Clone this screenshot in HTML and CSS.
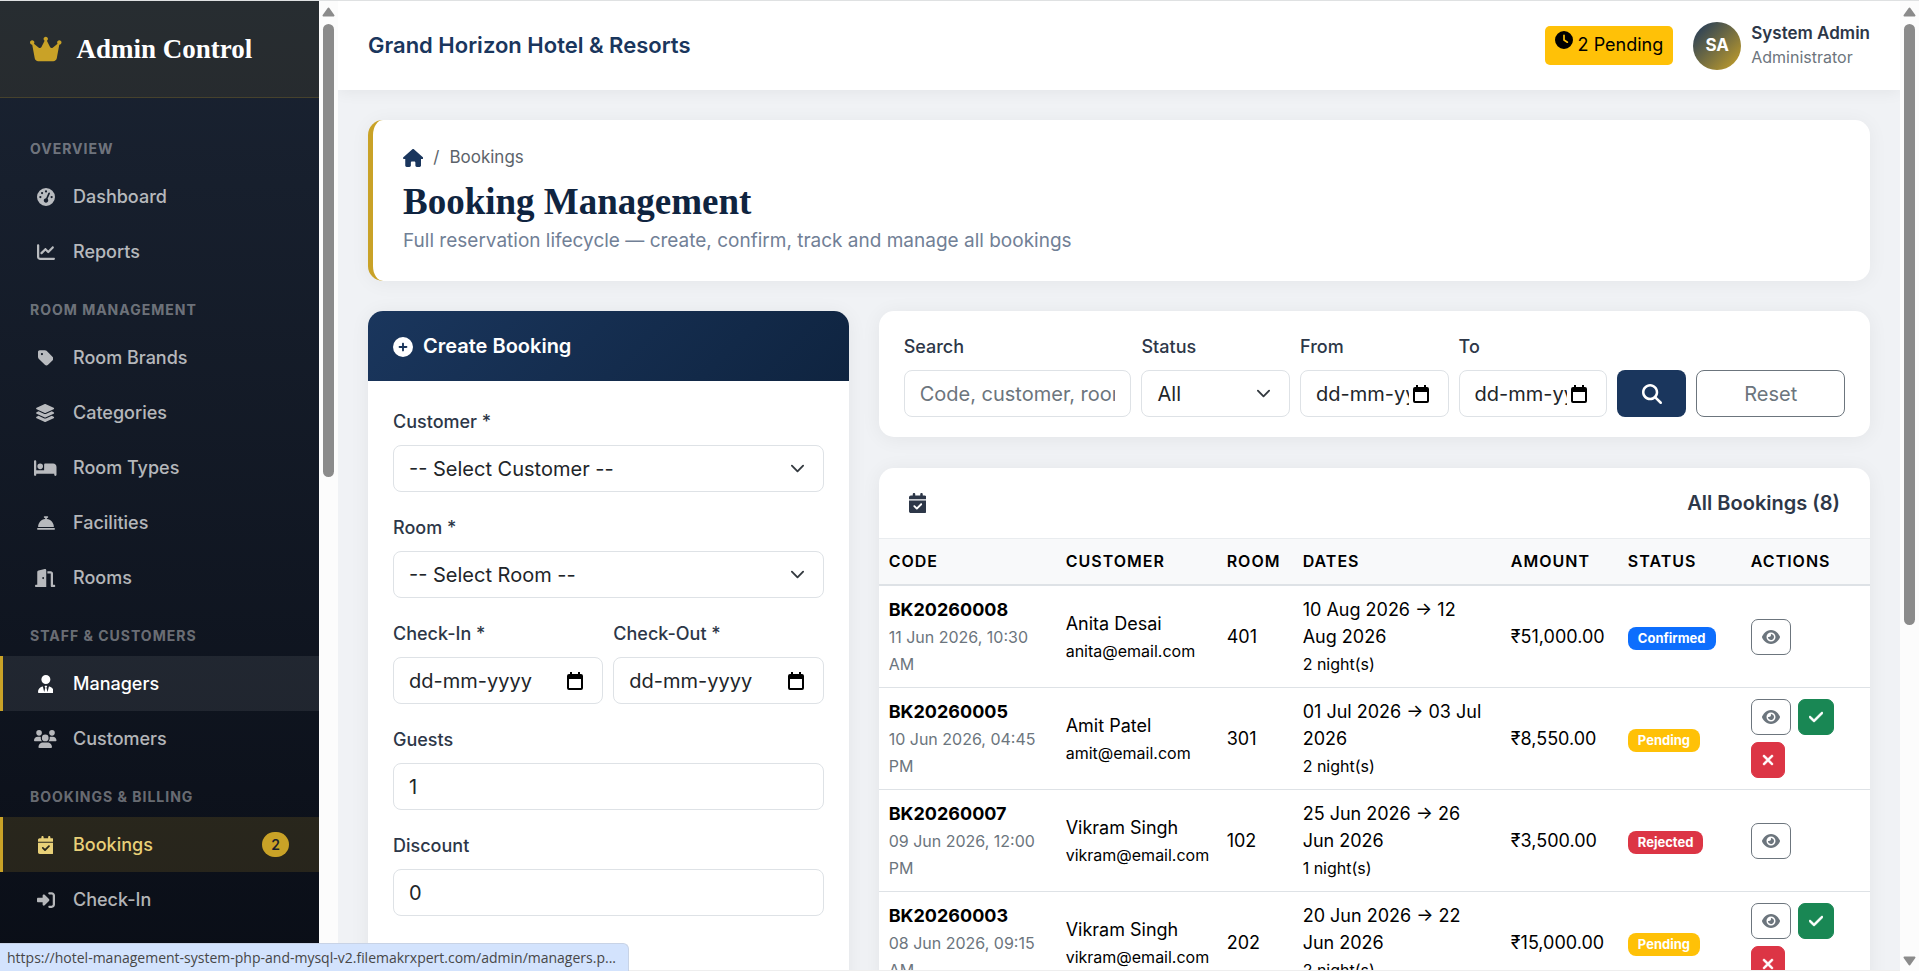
FILE: index.html
```html
<!DOCTYPE html>
<html lang="en">
<head>
  <meta charset="UTF-8" />
  <meta name="viewport" content="width=device-width, initial-scale=1" />
  <title>Booking Management</title>
  <link rel="stylesheet" href="styles.css">
</head>
<body>

  <!-- icon shapes -->
  <svg class="sprite" aria-hidden="true">
    <defs>
      <path id="i-crown" d="M309 106c11.4-7 19-19.7 19-34c0-22.1-17.9-40-40-40s-40 17.9-40 40c0 14.4 7.6 27 19 34L209.700 220.600c-9.100 18.200-32.700 23.400-48.600 10.700L72 160c5-6.700 8-15 8-24c0-22.100-17.900-40-40-40S0 113.900 0 136s17.900 40 40 40c.2 0 .5 0 .7 0L86.400 427.400c5.500 30.400 32 52.600 63 52.600H426.600c30.900 0 57.400-22.100 63-52.600L535.300 176c.2 0 .5 0 .7 0c22.100 0 40-17.900 40-40s-17.900-40-40-40s-40 17.900-40 40c0 9 3 17.300 8 24l-89.100 71.300c-15.900 12.700-39.500 7.500-48.600-10.700L309 106z"/>
      <path id="i-gauge" d="M0 256a256 256 0 1 1 512 0A256 256 0 1 1 0 256zM288 96a32 32 0 1 0 -64 0 32 32 0 1 0 64 0zM256 416c35.3 0 64-28.7 64-64c0-17.4-6.9-33.1-18.1-44.600L366 161.700c5.300-12.100-.2-26.300-12.300-31.600s-26.300 .2-31.600 12.300L257.900 288c-.6 0-1.300 0-1.900 0c-35.300 0-64 28.700-64 64s28.700 64 64 64zM176 144a32 32 0 1 0 -64 0 32 32 0 1 0 64 0zM96 288a32 32 0 1 0 0-64 32 32 0 1 0 0 64zm352-32a32 32 0 1 0 -64 0 32 32 0 1 0 64 0z"/>
      <path id="i-chart" d="M64 64c0-17.7-14.3-32-32-32S0 46.3 0 64V400c0 44.2 35.8 80 80 80H480c17.7 0 32-14.3 32-32s-14.3-32-32-32H80c-8.800 0-16-7.200-16-16V64zm406.600 86.600c12.500-12.500 12.500-32.800 0-45.300s-32.800-12.500-45.300 0L320 210.700l-57.400-57.400c-12.500-12.500-32.800-12.500-45.300 0l-112 112c-12.500 12.500-12.500 32.800 0 45.300s32.800 12.500 45.300 0L240 221.300l57.400 57.400c12.500 12.500 32.800 12.500 45.300 0l128-128z"/>
      <path id="i-tag" d="M0 80V229.500c0 17 6.700 33.300 18.700 45.300l176 176c25 25 65.500 25 90.500 0L418.700 317.300c25-25 25-65.500 0-90.500l-176-176c-12-12-28.300-18.700-45.300-18.700H48C21.500 32 0 53.500 0 80zm112 32a32 32 0 1 1 0 64 32 32 0 1 1 0-64z"/>
      <path id="i-layers" d="M264.5 5.200c14.900-6.900 32.100-6.900 47 0l218.600 101c8.500 3.900 13.900 12.400 13.900 21.800s-5.400 17.900-13.900 21.800l-218.600 101c-14.900 6.900-32.100 6.900-47 0L45.900 149.800C37.400 145.800 32 137.300 32 128s5.400-17.900 13.900-21.800L264.500 5.200zM476.900 209.600l53.200 24.600c8.500 3.900 13.900 12.400 13.900 21.800s-5.400 17.900-13.900 21.800l-218.600 101c-14.900 6.900-32.100 6.900-47 0L45.900 277.800C37.400 273.800 32 265.300 32 256s5.400-17.900 13.900-21.800l53.200-24.600 152 70.200c23.400 10.800 50.400 10.800 73.800 0l152-70.200zm-152 198.200l152-70.200 53.200 24.600c8.500 3.900 13.900 12.400 13.900 21.800s-5.400 17.900-13.900 21.800l-218.600 101c-14.900 6.900-32.100 6.900-47 0L45.900 405.800C37.400 401.800 32 393.300 32 384s5.400-17.900 13.900-21.800l53.200-24.600 152 70.200c23.400 10.800 50.400 10.800 73.800 0z"/>
      <path id="i-bed" d="M32 32c17.700 0 32 14.300 32 32V320H288V160c0-17.700 14.300-32 32-32H544c53 0 96 43 96 96V448c0 17.700-14.300 32-32 32s-32-14.300-32-32V416H352 320 64v32c0 17.700-14.300 32-32 32s-32-14.300-32-32V64C0 46.300 14.300 32 32 32zm144 96a80 80 0 1 1 0 160 80 80 0 1 1 0-160z"/>
      <path id="i-bell" d="M216 64c-13.300 0-24 10.700-24 24s10.700 24 24 24h16v33.300C119.600 157.200 32 252.400 32 368H480c0-115.600-87.600-210.800-200-222.700V112h16c13.300 0 24-10.700 24-24s-10.700-24-24-24H256 216zM24 400c-13.300 0-24 10.700-24 24s10.700 24 24 24H488c13.300 0 24-10.700 24-24s-10.700-24-24-24H24z"/>
      <path id="i-door" d="M320 32c0-9.900-4.500-19.200-12.300-25.200S289.800-1.400 280.200 1l-179.900 45C79 51.300 64 70.500 64 92.500V448H32c-17.700 0-32 14.300-32 32s14.300 32 32 32H96 288h32V480 32zM256 256c0 17.700-10.700 32-24 32s-24-14.300-24-32s10.700-32 24-32s24 14.300 24 32zm96-128h96V480c0 17.700 14.300 32 32 32h64c17.700 0 32-14.300 32-32s-14.300-32-32-32H512V128c0-35.300-28.700-64-64-64H352v64z"/>
      <path id="i-tie" d="M96 128a128 128 0 1 0 256 0A128 128 0 1 0 96 128zm94.500 200.200l18.600 31L175.800 483.100l-36-146.900c-2-8.100-9.800-13.400-17.900-11.300C51.900 342.400 0 405.800 0 481.300c0 17 13.800 30.700 30.700 30.700H162.500c0 0 0 0 .1 0H168 280h5.500c0 0 0 0 .1 0H417.300c17 0 30.700-13.800 30.700-30.700c0-75.500-51.900-138.900-121.900-156.400c-8.100-2-15.900 3.300-17.900 11.300l-36 146.900L238.900 359.200l18.600-31c6.400-10.700-1.300-24.200-13.700-24.200H224 204.300c-12.400 0-20.100 13.600-13.700 24.200z"/>
      <path id="i-users" d="M144 0a80 80 0 1 1 0 160A80 80 0 1 1 144 0zM512 0a80 80 0 1 1 0 160A80 80 0 1 1 512 0zM0 298.700C0 239.800 47.800 192 106.700 192h42.700c15.900 0 31 3.500 44.600 9.700c-1.300 7.200-1.900 14.700-1.900 22.300c0 38.200 16.800 72.500 43.300 96c-.2 0-.4 0-.7 0H21.300C9.600 320 0 310.400 0 298.700zM405.300 320c-.2 0-.4 0-.7 0c26.600-23.500 43.300-57.800 43.300-96c0-7.600-.7-15-1.900-22.300c13.600-6.300 28.700-9.700 44.600-9.700h42.700C592.200 192 640 239.800 640 298.700c0 11.800-9.600 21.300-21.300 21.300H405.300zM224 224a96 96 0 1 1 192 0 96 96 0 1 1 -192 0zM128 485.300C128 411.700 187.700 352 261.300 352H378.700C452.300 352 512 411.700 512 485.300c0 14.700-11.900 26.700-26.700 26.700H154.700c-14.700 0-26.700-11.900-26.700-26.700z"/>
      <path id="i-calendar" d="M128 0c17.700 0 32 14.300 32 32V64H288V32c0-17.700 14.300-32 32-32s32 14.300 32 32V64h48c26.500 0 48 21.500 48 48v48H0V112C0 85.500 21.500 64 48 64H96V32c0-17.700 14.300-32 32-32zM0 192H448V464c0 26.500-21.500 48-48 48H48c-26.500 0-48-21.500-48-48V192zM329 305c9.400-9.400 9.400-24.600 0-33.900s-24.600-9.400-33.900 0l-95 95-47-47c-9.400-9.400-24.600-9.400-33.900 0s-9.400 24.600 0 33.900l64 64c9.400 9.400 24.600 9.400 33.900 0L329 305z"/>
      <path id="i-signin" d="M217.900 105.900L340.700 228.700c7.200 7.200 11.300 17.100 11.300 27.300s-4.100 20.100-11.300 27.300L217.900 406.100c-6.400 6.400-15 9.900-24 9.900c-18.700 0-33.900-15.200-33.900-33.900l0-62.100L32 320c-17.700 0-32-14.300-32-32l0-64c0-17.700 14.300-32 32-32l128 0 0-62.100c0-18.700 15.200-33.900 33.900-33.900c9 0 17.600 3.600 24 9.900zM352 416l64 0c17.700 0 32-14.300 32-32l0-256c0-17.700-14.300-32-32-32l-64 0c-17.700 0-32-14.300-32-32s14.300-32 32-32l64 0c53 0 96 43 96 96l0 256c0 53-43 96-96 96l-64 0c-17.700 0-32-14.300-32-32s14.300-32 32-32z"/>
      <path id="i-clock" d="M256 0a256 256 0 1 1 0 512A256 256 0 1 1 256 0zM232 120V256c0 8 4 15.500 10.700 20l96 64c11 7.400 25.900 4.400 33.300-6.700s4.400-25.900-6.700-33.300L280 243.200V120c0-13.300-10.700-24-24-24s-24 10.700-24 24z"/>
      <path id="i-house" d="M575.800 255.500c0 18-15 32.100-32 32.100h-32l.7 160.200c0 2.700-.2 5.400-.5 8.100V472c0 22.100-17.900 40-40 40H456c-1.100 0-2.200 0-3.300-.1c-1.400 .1-2.800 .1-4.200 .1H416 392c-22.100 0-40-17.900-40-40V448 384c0-17.700-14.300-32-32-32H256c-17.700 0-32 14.300-32 32v64 24c0 22.100-17.900 40-40 40H160 128.100c-1.500 0-3-.1-4.500-.2c-1.200 .1-2.400 .2-3.600 .2H104c-22.100 0-40-17.900-40-40V360c0-.9 0-1.900 .1-2.800V287.600H32c-18 0-32-14-32-32.100c0-9 3-17 10-24L266.400 8c7-7 15-8 22-8s15 2 21 7L564.800 231.500c8 7 12 15 11 24z"/>
      <path id="i-plus" d="M256 512A256 256 0 1 0 256 0a256 256 0 1 0 0 512zM232 344V280H168c-13.300 0-24-10.700-24-24s10.700-24 24-24h64V168c0-13.300 10.700-24 24-24s24 10.700 24 24v64h64c13.300 0 24 10.700 24 24s-10.700 24-24 24H280v64c0 13.300-10.700 24-24 24s-24-10.700-24-24z"/>
      <path id="i-search" d="M416 208c0 45.900-14.900 88.300-40 122.700L502.600 457.400c12.500 12.500 12.500 32.800 0 45.300s-32.800 12.500-45.300 0L330.700 376c-34.400 25.200-76.800 40-122.700 40C93.100 416 0 322.900 0 208S93.100 0 208 0S416 93.100 416 208zM208 352a144 144 0 1 0 0-288 144 144 0 1 0 0 288z"/>
      <path id="i-eye" d="M288 32c-80.800 0-145.500 36.800-192.600 80.600C48.600 156 17.300 208 2.500 243.700c-3.300 7.900-3.300 16.700 0 24.600C17.300 304 48.600 356 95.400 399.400C142.500 443.200 207.200 480 288 480s145.500-36.800 192.600-80.600c46.800-43.500 78.100-95.400 93-131.100c3.300-7.900 3.300-16.700 0-24.600c-14.900-35.700-46.200-87.700-93-131.100C433.500 68.800 368.800 32 288 32zM144 256a144 144 0 1 1 288 0 144 144 0 1 1 -288 0zm144-64c0 35.300-28.700 64-64 64c-7.100 0-13.900-1.200-20.300-3.300c-5.500-1.800-11.900 1.600-11.700 7.400c.3 6.900 1.300 13.800 3.200 20.700c13.700 51.200 66.400 81.600 117.600 67.900s81.600-66.400 67.900-117.600c-11.100-41.500-47.800-69.400-88.600-71.100c-5.800-.2-9.200 6.100-7.400 11.700c2.100 6.400 3.300 13.200 3.300 20.300z"/>
      <path id="i-check" d="M438.600 105.400c12.500 12.500 12.500 32.800 0 45.300l-256 256c-12.500 12.500-32.800 12.500-45.300 0l-128-128c-12.500-12.500-12.500-32.800 0-45.300s32.800-12.500 45.300 0L160 338.700 393.400 105.400c12.500-12.500 32.800-12.500 45.300 0z"/>
      <path id="i-times" d="M342.600 150.600c12.500-12.500 12.500-32.800 0-45.300s-32.800-12.500-45.300 0L192 210.700 86.600 105.400c-12.500-12.500-32.800-12.500-45.300 0s-12.500 32.800 0 45.300L146.700 256 41.400 361.400c-12.500 12.500-12.500 32.800 0 45.300s32.800 12.500 45.300 0L192 301.300 297.400 406.600c12.500 12.500 32.800 12.500 45.300 0s12.500-32.800 0-45.300L237.300 256 342.600 150.600z"/>
      <path id="i-date" fill-rule="evenodd" d="M3 0h2v2h6V0h2v2h1q2 0 2 2v12q0 2-2 2H2q-2 0-2-2V4q0-2 2-2h1zM2 7v9h12V7z"/>
    </defs>
  </svg>

  <aside class="sidebar">
    <div class="brand">
      <svg class="icon brand-icon" viewBox="0 0 576 512"><use href="#i-crown"/></svg>
      <span>Admin Control</span>
    </div>
    <nav class="menu">
      <h6 class="menu-title">OVERVIEW</h6>
      <a href="#" class="menu-link"><span class="menu-icon"><svg class="icon" viewBox="0 0 512 512"><use href="#i-gauge"/></svg></span>Dashboard</a>
      <a href="#" class="menu-link"><span class="menu-icon"><svg class="icon" viewBox="0 0 512 512"><use href="#i-chart"/></svg></span>Reports</a>

      <h6 class="menu-title">ROOM MANAGEMENT</h6>
      <a href="#" class="menu-link"><span class="menu-icon"><svg class="icon" viewBox="0 0 448 512"><use href="#i-tag"/></svg></span>Room Brands</a>
      <a href="#" class="menu-link"><span class="menu-icon"><svg class="icon" viewBox="0 0 576 512"><use href="#i-layers"/></svg></span>Categories</a>
      <a href="#" class="menu-link"><span class="menu-icon"><svg class="icon" viewBox="0 0 640 512"><use href="#i-bed"/></svg></span>Room Types</a>
      <a href="#" class="menu-link"><span class="menu-icon"><svg class="icon" viewBox="0 0 512 512"><use href="#i-bell"/></svg></span>Facilities</a>
      <a href="#" class="menu-link"><span class="menu-icon"><svg class="icon" viewBox="0 0 576 512"><use href="#i-door"/></svg></span>Rooms</a>

      <h6 class="menu-title">STAFF &amp; CUSTOMERS</h6>
      <a href="#" class="menu-link hovered"><span class="menu-icon"><svg class="icon" viewBox="0 0 448 512"><use href="#i-tie"/></svg></span>Managers</a>
      <a href="#" class="menu-link"><span class="menu-icon"><svg class="icon" viewBox="0 0 640 512"><use href="#i-users"/></svg></span>Customers</a>

      <h6 class="menu-title">BOOKINGS &amp; BILLING</h6>
      <a href="#" class="menu-link active"><span class="menu-icon"><svg class="icon" viewBox="0 0 448 512"><use href="#i-calendar"/></svg></span>Bookings<span class="menu-badge">2</span></a>
      <a href="#" class="menu-link"><span class="menu-icon"><svg class="icon" viewBox="0 0 512 512"><use href="#i-signin"/></svg></span>Check-In</a>
    </nav>
  </aside>

  <div class="scrollbar" aria-hidden="true">
    <svg class="arrow" viewBox="0 0 13 10"><path d="M6.500 1.500L11.500 8.500H1.500z"/></svg>
    <div class="track"><div class="thumb thumb-menu"></div></div>
    <svg class="arrow" viewBox="0 0 13 10"><path d="M6.500 8.500L11.500 1.500H1.500z"/></svg>
  </div>

  <main class="main">
    <header class="topbar">
      <div class="hotel-name">Grand Horizon Hotel &amp; Resorts</div>
      <div class="topbar-right">
        <a href="#" class="pending"><svg class="icon" viewBox="0 0 512 512"><use href="#i-clock"/></svg>2 Pending</a>
        <div class="user">
          <div class="avatar">SA</div>
          <div>
            <div class="user-name">System Admin</div>
            <div class="user-role">Administrator</div>
          </div>
        </div>
      </div>
    </header>

    <div class="content">
      <section class="page-header">
        <div class="breadcrumb">
          <a href="#" aria-label="Home"><svg class="icon" viewBox="0 0 576 512"><use href="#i-house"/></svg></a>
          <span>/</span>
          <span>Bookings</span>
        </div>
        <h1>Booking Management</h1>
        <p>Full reservation lifecycle — create, confirm, track and manage all bookings</p>
      </section>

      <div class="columns">
        <section class="card create">
          <h2 class="create-head"><svg class="icon" viewBox="0 0 512 512"><use href="#i-plus"/></svg>Create Booking</h2>
          <form class="create-body">
            <div class="field">
              <label for="customer">Customer *</label>
              <select id="customer" class="control"><option>-- Select Customer --</option></select>
            </div>
            <div class="field">
              <label for="room">Room *</label>
              <select id="room" class="control"><option>-- Select Room --</option></select>
            </div>
            <div class="field-row">
              <div class="field">
                <label for="checkin">Check-In *</label>
                <div class="control date"><input type="text" id="checkin" placeholder="dd-mm-yyyy"><button type="button" aria-label="Pick date"><svg viewBox="0 0 16 18"><use href="#i-date"/></svg></button></div>
              </div>
              <div class="field">
                <label for="checkout">Check-Out *</label>
                <div class="control date"><input type="text" id="checkout" placeholder="dd-mm-yyyy"><button type="button" aria-label="Pick date"><svg viewBox="0 0 16 18"><use href="#i-date"/></svg></button></div>
              </div>
            </div>
            <div class="field">
              <label for="guests">Guests</label>
              <input type="text" id="guests" class="control" value="1">
            </div>
            <div class="field">
              <label for="discount">Discount</label>
              <input type="text" id="discount" class="control" value="0">
            </div>
          </form>
        </section>

        <div class="right">
          <form class="card filters">
            <div class="filter wide">
              <label for="search">Search</label>
              <input type="text" id="search" class="control" placeholder="Code, customer, room">
            </div>
            <div class="filter">
              <label for="status">Status</label>
              <select id="status" class="control"><option>All</option></select>
            </div>
            <div class="filter">
              <label for="from">From</label>
              <div class="control date"><input type="text" id="from" placeholder="dd-mm-yyyy"><button type="button" aria-label="Pick date"><svg viewBox="0 0 16 18"><use href="#i-date"/></svg></button></div>
            </div>
            <div class="filter">
              <label for="to">To</label>
              <div class="control date"><input type="text" id="to" placeholder="dd-mm-yyyy"><button type="button" aria-label="Pick date"><svg viewBox="0 0 16 18"><use href="#i-date"/></svg></button></div>
            </div>
            <button type="submit" class="btn-search" aria-label="Search"><svg class="icon" viewBox="0 0 512 512"><use href="#i-search"/></svg></button>
            <button type="reset" class="btn-reset">Reset</button>
          </form>

          <section class="card bookings">
            <div class="bookings-head">
              <svg class="icon" viewBox="0 0 448 512"><use href="#i-calendar"/></svg>
              <span>All Bookings (8)</span>
            </div>
            <table>
              <thead>
                <tr>
                  <th class="c-code">CODE</th>
                  <th class="c-customer">CUSTOMER</th>
                  <th class="c-room">ROOM</th>
                  <th class="c-dates">DATES</th>
                  <th class="c-amount">AMOUNT</th>
                  <th class="c-status">STATUS</th>
                  <th>ACTIONS</th>
                </tr>
              </thead>
              <tbody>
                <tr>
                  <td><strong>BK20260008</strong><br><small class="muted">11 Jun 2026, 10:30 AM</small></td>
                  <td>Anita Desai<br><small>anita@email.com</small></td>
                  <td>401</td>
                  <td>10 Aug 2026 → 12 Aug 2026<br><small>2 night(s)</small></td>
                  <td>₹51,000.00</td>
                  <td><span class="badge confirmed">Confirmed</span></td>
                  <td>
                    <div class="actions">
                      <button class="act view" aria-label="View"><svg class="icon" viewBox="0 0 576 512"><use href="#i-eye"/></svg></button>
                    </div>
                  </td>
                </tr>
                <tr>
                  <td><strong>BK20260005</strong><br><small class="muted">10 Jun 2026, 04:45 PM</small></td>
                  <td>Amit Patel<br><small>amit@email.com</small></td>
                  <td>301</td>
                  <td>01 Jul 2026 → 03 Jul 2026<br><small>2 night(s)</small></td>
                  <td>₹8,550.00</td>
                  <td><span class="badge waiting">Pending</span></td>
                  <td>
                    <div class="actions">
                      <button class="act view" aria-label="View"><svg class="icon" viewBox="0 0 576 512"><use href="#i-eye"/></svg></button>
                      <button class="act accept" aria-label="Confirm"><svg class="icon" viewBox="0 0 448 512"><use href="#i-check"/></svg></button>
                      <button class="act reject" aria-label="Reject"><svg class="icon" viewBox="0 0 384 512"><use href="#i-times"/></svg></button>
                    </div>
                  </td>
                </tr>
                <tr>
                  <td><strong>BK20260007</strong><br><small class="muted">09 Jun 2026, 12:00 PM</small></td>
                  <td>Vikram Singh<br><small>vikram@email.com</small></td>
                  <td>102</td>
                  <td>25 Jun 2026 → 26 Jun 2026<br><small>1 night(s)</small></td>
                  <td>₹3,500.00</td>
                  <td><span class="badge rejected">Rejected</span></td>
                  <td>
                    <div class="actions">
                      <button class="act view" aria-label="View"><svg class="icon" viewBox="0 0 576 512"><use href="#i-eye"/></svg></button>
                    </div>
                  </td>
                </tr>
                <tr>
                  <td><strong>BK20260003</strong><br><small class="muted">08 Jun 2026, 09:15 AM</small></td>
                  <td>Vikram Singh<br><small>vikram@email.com</small></td>
                  <td>202</td>
                  <td>20 Jun 2026 → 22 Jun 2026<br><small>2 night(s)</small></td>
                  <td>₹15,000.00</td>
                  <td><span class="badge waiting">Pending</span></td>
                  <td>
                    <div class="actions">
                      <button class="act view" aria-label="View"><svg class="icon" viewBox="0 0 576 512"><use href="#i-eye"/></svg></button>
                      <button class="act accept" aria-label="Confirm"><svg class="icon" viewBox="0 0 448 512"><use href="#i-check"/></svg></button>
                      <button class="act reject" aria-label="Reject"><svg class="icon" viewBox="0 0 384 512"><use href="#i-times"/></svg></button>
                    </div>
                  </td>
                </tr>
              </tbody>
            </table>
          </section>
        </div>
      </div>
    </div>
  </main>

  <div class="scrollbar" aria-hidden="true">
    <svg class="arrow" viewBox="0 0 13 10"><path d="M6.500 1.500L11.500 8.500H1.500z"/></svg>
    <div class="track"><div class="thumb thumb-page"></div></div>
    <svg class="arrow" viewBox="0 0 13 10"><path d="M6.500 8.500L11.500 1.500H1.500z"/></svg>
  </div>

  <div class="link-status">https://hotel-management-system-php-and-mysql-v2.filemakrxpert.com/admin/managers.p...</div>

</body>
</html>
```

FILE: styles.css
```css
* {
  box-sizing: border-box;
}
body {
  margin: 0;
  height: 100vh;
  overflow: hidden;
  display: flex;
  border-top: 1px solid #dfe1e2;
  background-color: #f0f2f5;
  color: #212529;
  font-family: Inter, "Liberation Sans", sans-serif;
  font-size: 18px;
  line-height: 27px;
}
button, input, select {
  font-family: inherit;
  font-size: 20px;
  color: #212529;
}
button {
  cursor: pointer;
  padding: 0;
}
a {
  color: inherit;
  text-decoration: none;
}
.sprite {
  position: absolute;
  width: 0;
  height: 0;
}
.icon {
  height: 18px;
  fill: currentColor;
}

/* sidebar */
.sidebar {
  flex: 0 0 319px;
  overflow: hidden;
  background: linear-gradient(180deg, #1a2332, #0a0e17);
}
.brand {
  display: flex;
  align-items: center;
  gap: 15px;
  height: 97px;
  padding: 0 30px;
  background-color: rgba(201, 162, 39, 0.08);
  border-bottom: 1px solid rgba(201, 162, 39, 0.2);
  color: white;
  font-family: "Liberation Serif", serif;
  font-size: 27px;
  font-weight: bold;
}
.brand-icon {
  height: 28px;
  color: #c9a227;
}
.menu {
  padding-top: 20px;
}
.menu-title {
  margin: 0;
  padding: 20px 30px 10px;
  font-size: 14px;
  line-height: 21px;
  font-weight: 700;
  letter-spacing: 1px;
  color: rgba(255, 255, 255, 0.4);
}
.menu-link {
  display: flex;
  align-items: center;
  padding: 14px 30px;
  border-left: 3px solid transparent;
  font-weight: 500;
  color: rgba(255, 255, 255, 0.7);
}
.menu-icon {
  display: flex;
  justify-content: center;
  width: 25px;
  margin-right: 15px;
}
.hovered {
  background-color: rgba(255, 255, 255, 0.08);
  border-left-color: #c9a227;
  color: white;
}
.active {
  background-color: rgba(201, 162, 39, 0.15);
  border-left-color: #c9a227;
  color: #e8d078;
}
.menu-badge {
  margin-left: auto;
  padding: 2px 9px;
  border-radius: 13px;
  background-color: #c9a227;
  color: #1a202c;
  font-size: 14px;
  line-height: 21px;
  font-weight: 600;
}

/* scrollbars */
.scrollbar {
  flex: 0 0 19px;
  display: flex;
  flex-direction: column;
  align-items: center;
  padding: 6px 0 5px;
  background-color: #fcfcfc;
}
.arrow {
  width: 13px;
  height: 10px;
  fill: #8b8b8b;
  stroke: #8b8b8b;
  stroke-width: 2;
  stroke-linejoin: round;
}
.track {
  flex: 1;
  padding: 7px 0;
}
.thumb {
  width: 11px;
  border-radius: 6px;
  background-color: #8b8b8b;
}
.thumb-menu {
  height: 49%;
}
.thumb-page {
  height: 65%;
}

/* top bar */
.main {
  flex: 1;
  min-width: 0;
  overflow: hidden;
  border-bottom: 1px solid #eeeeee;
}
.topbar {
  display: flex;
  align-items: center;
  justify-content: space-between;
  height: 89px;
  padding: 0 30px;
  background-color: white;
  box-shadow: 0 2px 15px rgba(0, 0, 0, 0.06);
}
.hotel-name {
  font-size: 22px;
  font-weight: 600;
  color: #1a365d;
}
.topbar-right {
  display: flex;
  align-items: center;
  gap: 20px;
}
.pending {
  display: flex;
  align-items: flex-start;
  gap: 5px;
  padding: 5px 10px 7px;
  border-radius: 5px;
  background-color: #ffc107;
  color: black;
}
.user {
  display: flex;
  align-items: center;
  gap: 10px;
}
.avatar {
  display: flex;
  align-items: center;
  justify-content: center;
  width: 48px;
  height: 48px;
  border-radius: 50%;
  background: linear-gradient(135deg, #1a365d, #c9a227);
  color: white;
  font-size: 17px;
  font-weight: 700;
}
.user-name {
  font-size: 17px;
  font-weight: 600;
  line-height: 23px;
  color: #2d3748;
}
.user-role {
  font-size: 16px;
  line-height: 24px;
  color: #6c757d;
}

/* page header */
.content {
  padding: 30px;
}
.page-header {
  margin-bottom: 30px;
  padding: 24px 30px 26px;
  border-left: 5px solid #c9a227;
  border-radius: 15px;
  background-color: white;
  box-shadow: 0 2px 20px rgba(0, 0, 0, 0.05);
}
.breadcrumb {
  display: flex;
  align-items: center;
  gap: 10px;
  font-size: 17px;
  color: #5c636a;
}
.breadcrumb a {
  display: flex;
  color: #1a365d;
}
.page-header h1 {
  margin: 10px 0 4px;
  font-family: "Liberation Serif", serif;
  font-size: 37px;
  line-height: 42px;
  color: #0f2440;
}
.page-header p {
  margin: 0;
  font-size: 19px;
  line-height: 28px;
  color: #718096;
}

.columns {
  display: grid;
  grid-template-columns: repeat(3, 1fr);
  gap: 30px;
  align-items: start;
}
.right {
  grid-column: span 2;
}
.card {
  border-radius: 15px;
  background-color: white;
  box-shadow: 0 2px 20px rgba(0, 0, 0, 0.06);
}

/* create form */
.create-head {
  display: flex;
  align-items: center;
  gap: 10px;
  margin: 0;
  padding: 22px 25px 21px;
  border-radius: 15px 15px 0 0;
  background: linear-gradient(135deg, #1a365d, #0f2440);
  color: white;
  font-size: 20px;
  font-weight: 600;
}
.create-head .icon {
  height: 20px;
}
.create-body {
  padding: 27px 25px 80px;
}
.field {
  min-width: 0;
  margin-bottom: 22px;
}
.field-row {
  display: grid;
  grid-template-columns: 1fr 1fr;
  gap: 10px;
}
label {
  display: block;
  margin-bottom: 10px;
  font-weight: 500;
  color: #2d3748;
}
.control {
  display: block;
  width: 100%;
  height: 47px;
  padding: 0 15px;
  border: 1px solid #dee2e6;
  border-radius: 8px;
  background-color: white;
}
select.control {
  appearance: none;
  background-image: url("data:image/svg+xml,%3Csvg xmlns='http://www.w3.org/2000/svg' viewBox='0 0 16 16'%3E%3Cpath fill='none' stroke='%23343a40' stroke-linecap='round' stroke-linejoin='round' stroke-width='2' d='m2 5 6 6 6-6'/%3E%3C/svg%3E");
  background-repeat: no-repeat;
  background-position: right 18px center;
  background-size: 15px 15px;
}
.date {
  display: flex;
  align-items: center;
  gap: 4px;
  padding-right: 19px;
}
.date input {
  flex: 1;
  min-width: 0;
  padding: 0;
  border: none;
  outline: none;
  background: none;
}
.date button {
  flex: none;
  display: flex;
  border: none;
  background: none;
}
.date svg {
  width: 16px;
  height: 18px;
}
input::placeholder {
  color: #6c757d;
  opacity: 1;
}
.date input::placeholder {
  color: #212529;
}

/* filters */
.filters {
  display: grid;
  grid-template-columns: repeat(12, 1fr);
  gap: 10px;
  align-items: end;
  margin-bottom: 31px;
  padding: 22px 25px 20px;
}
.filter {
  grid-column: span 2;
  min-width: 0;
}
.wide {
  grid-column: span 3;
}
.btn-search, .btn-reset {
  display: flex;
  align-items: center;
  justify-content: center;
  height: 47px;
  border-radius: 8px;
}
.btn-search {
  border: none;
  background-color: #1a365d;
  color: white;
}
.btn-search .icon {
  height: 20px;
}
.btn-reset {
  grid-column: span 2;
  border: 1px solid #6c757d;
  background-color: white;
  color: #6c757d;
}

/* bookings table */
.bookings {
  overflow: hidden;
}
.bookings-head {
  display: flex;
  align-items: center;
  justify-content: space-between;
  height: 71px;
  padding: 0 30px;
  border-bottom: 1px solid #e9ecef;
  color: #2d3748;
  font-size: 20px;
  font-weight: 600;
}
.bookings-head .icon {
  height: 20px;
}
table {
  width: 100%;
  table-layout: fixed;
  border-collapse: collapse;
  color: black;
}
th {
  padding: 9px 10px;
  border-bottom: 2px solid #dee2e6;
  background-color: #f8f9fa;
  font-size: 16px;
  font-weight: 600;
  letter-spacing: 1px;
  text-align: left;
}
td {
  padding: 10px;
  border-bottom: 1px solid #dee2e6;
  vertical-align: middle;
}
.c-code {
  width: 177px;
}
.c-customer {
  width: 161px;
}
.c-room {
  width: 76px;
}
.c-dates {
  width: 21%;
}
.c-amount {
  width: 117px;
}
.c-status {
  width: 123px;
}
small {
  font-size: 16px;
  line-height: 20px;
}
.muted {
  color: #6c757d;
}
.badge {
  display: inline-block;
  padding: 4px 10px 5px;
  border-radius: 8px;
  color: white;
  font-size: 13px;
  line-height: 14px;
  font-weight: 700;
}
.confirmed {
  background-color: #0d6efd;
}
.waiting {
  background-color: #ffc107;
}
.rejected {
  background-color: #dc3545;
}
.actions {
  display: flex;
  flex-wrap: wrap;
  gap: 7px;
}
.act {
  display: flex;
  align-items: center;
  justify-content: center;
  height: 36px;
  padding: 0 10px;
  border: 1px solid;
  border-radius: 7px;
  color: white;
}
.act .icon {
  height: 16px;
}
.view {
  border-color: #6c757d;
  background-color: white;
  color: #6c757d;
}
.accept {
  border-color: #198754;
  background-color: #198754;
}
.reject {
  border-color: #dc3545;
  background-color: #dc3545;
}
.accept .icon, .reject .icon {
  stroke: currentColor;
  stroke-width: 20;
}

/* link preview over the page */
.link-status {
  position: fixed;
  left: 0;
  bottom: 0;
  padding: 0 12px 0 7px;
  border-top: 1px solid #c8d3e6;
  border-right: 1px solid #c8d3e6;
  border-radius: 0 6px 0 0;
  background-color: #d3e3fd;
  color: #474747;
  font-family: "Open Sans", sans-serif;
  font-size: 14px;
}
```
